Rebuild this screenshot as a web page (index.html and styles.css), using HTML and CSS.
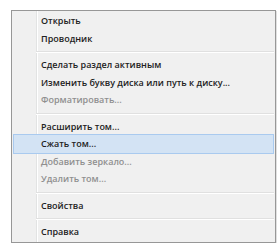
FILE: index.html
```html
<!DOCTYPE html>
<html>
<head>
<meta charset="utf-8">
<link rel="stylesheet" href="styles.css">
</head>
<body>
<div class="menu">
  <div class="item">Открыть</div>
  <div class="item">Проводник</div>
  <div class="sep"></div>
  <div class="item">Сделать раздел активным</div>
  <div class="item">Изменить букву диска или путь к диску...</div>
  <div class="item disabled">Форматировать...</div>
  <div class="sep"></div>
  <div class="item">Расширить том...</div>
  <div class="item hover">Сжать том...</div>
  <div class="item disabled">Добавить зеркало...</div>
  <div class="item disabled">Удалить том...</div>
  <div class="sep"></div>
  <div class="item">Свойства</div>
  <div class="sep"></div>
  <div class="item">Справка</div>
</div>
</body>
</html>
```
FILE: styles.css
```css
html, body {
  margin: 0;
  padding: 0;
  background: #ffffff;
}
body {
  padding: 10px 0 0 11px;
}
.menu {
  width: 263px;
  border: 1px solid #979797;
  background-color: #f0f0f0;
  background-image: linear-gradient(to right, transparent 24px, #e2e3e3 24px, #e2e3e3 25px, #ffffff 25px, #ffffff 26px, transparent 26px);
  padding: 1px 0 1px;
  display: flex;
  flex-direction: column;
  font-family: "Open Sans", "Noto Sans", sans-serif;
  font-size: 9px;
  font-weight: 600;
  color: #222222;
  box-shadow: 1px 1px 0 rgba(0,0,0,0.12);
}
.item {
  margin: 0 1px;
  height: 17.5px;
  line-height: 15.5px;
  padding-left: 27px;
  border: 1px solid transparent;
  box-sizing: border-box;
  white-space: nowrap;
}
.item.disabled {
  color: #8f8f8f;
}
.item.hover {
  background: #d3e3f4;
  border-color: #a9caef;
  height: 19.5px;
  margin-top: -1px;
  margin-bottom: -1px;
  line-height: 17.5px;
}
.sep {
  height: 9px;
  margin: 0 1px 0 24px;
  background: linear-gradient(to bottom, transparent 4px, #e0e0e0 4px, #e0e0e0 5px, #ffffff 5px, #ffffff 6px, transparent 6px);
}
```
